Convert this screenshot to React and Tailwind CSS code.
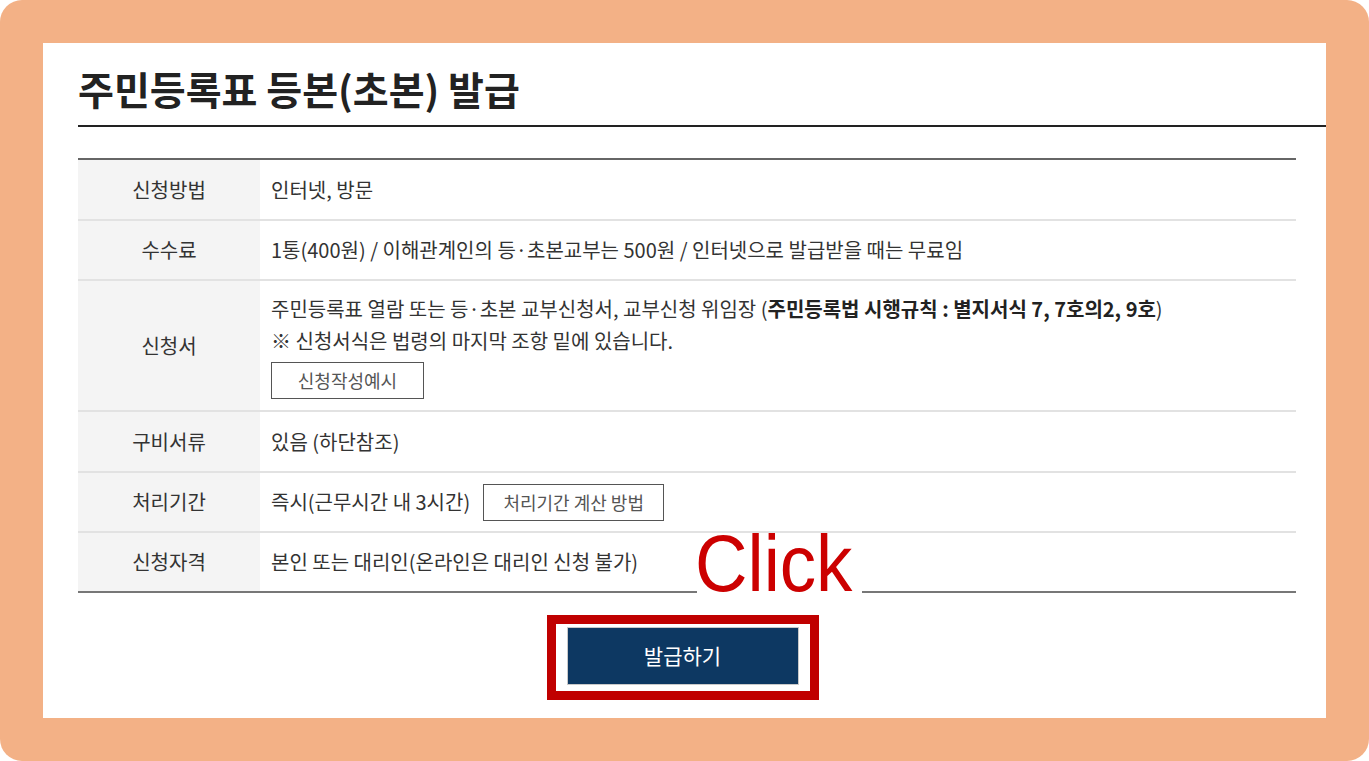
const rows = [
  { label: "신청방법", h: "h-[59px]", content: <span>인터넷, 방문</span> },
  {
    label: "수수료",
    h: "h-[58px]",
    content: <span>1통(400원) / 이해관계인의 등·초본교부는 500원 / 인터넷으로 발급받을 때는 무료임</span>,
  },
  {
    label: "신청서",
    h: "h-[129px]",
    content: (
      <div className="flex flex-col items-start">
        <p className="leading-[32px]">
          주민등록표 열람 또는 등·초본 교부신청서, 교부신청 위임장 (
          <b className="font-bold text-[#222]">주민등록법 시행규칙 : 별지서식 7, 7호의2, 9호</b>)
        </p>
        <p className="leading-[32px]">※ 신청서식은 법령의 마지막 조항 밑에 있습니다.</p>
        <button className="mt-[5px] h-[37px] w-[153px] border border-[#555] text-[18px] text-[#555]">신청작성예시</button>
      </div>
    ),
  },
  { label: "구비서류", h: "h-[59px]", content: <span>있음 (하단참조)</span> },
  {
    label: "처리기간",
    h: "h-[58px]",
    content: (
      <div className="flex items-center gap-[13px]">
        <span>즉시(근무시간 내 3시간)</span>
        <button className="h-[37px] w-[181px] border border-[#555] text-[18px] text-[#555]">처리기간 계산 방법</button>
      </div>
    ),
  },
  { label: "신청자격", h: "h-[58px]", content: <span>본인 또는 대리인(온라인은 대리인 신청 불가)</span> },
];

export default function App() {
  return (
    <div
      className="h-[761px] w-[1369px] bg-white"
      style={{ fontFamily: '"Noto Sans CJK KR", "Noto Sans", sans-serif' }}
    >
      <div className="h-full rounded-[22px] bg-[#f3b186] p-[43px]">
        <div className="h-full bg-white pl-[35px]">
          <h1 className="pt-[17px] text-[39px] font-bold leading-[56px] text-[#222]">
            주민등록표 등본(초본) 발급
          </h1>
          <div className="mt-[9px] h-[2px] bg-[#222]" />

          <div className="relative mr-[30px] mt-[31px]">
            <div className="border-y-2 border-b-[#777] border-t-[#666]">
              {rows.map((r, i) => (
                <div
                  key={r.label}
                  className={`grid grid-cols-[182px_1fr] ${i < rows.length - 1 ? "border-b-2 border-[#e2e2e2]" : ""}`}
                >
                  <div className={`flex items-center justify-center bg-[#f4f4f4] text-[20px] text-[#333] ${r.h}`}>
                    {r.label}
                  </div>
                  <div className={`flex items-center pl-[11px] text-[20px] text-[#333] ${r.h}`}>{r.content}</div>
                </div>
              ))}
            </div>

            <div className="absolute left-[619px] top-[376px] flex h-[63px] w-[165px] items-start bg-white">
              <span
                className="ml-[-2px] mt-[-10px] origin-left scale-x-[0.92] text-[79px] leading-[80px] text-[#cc0000]"
                style={{ fontFamily: '"Liberation Sans", Arial, sans-serif' }}
              >
                Click
              </span>
            </div>

            <div className="flex justify-center pr-[9px] pt-[22px]">
              <div className="border-[9px] border-[#c00000] px-[11px] pb-[6px] pt-[3px]">
                <button className="h-[58px] w-[232px] border border-[#c9c9c9] bg-[#0d3862] text-[21px] text-white">
                  발급하기
                </button>
              </div>
            </div>
          </div>
        </div>
      </div>
    </div>
  );
}
